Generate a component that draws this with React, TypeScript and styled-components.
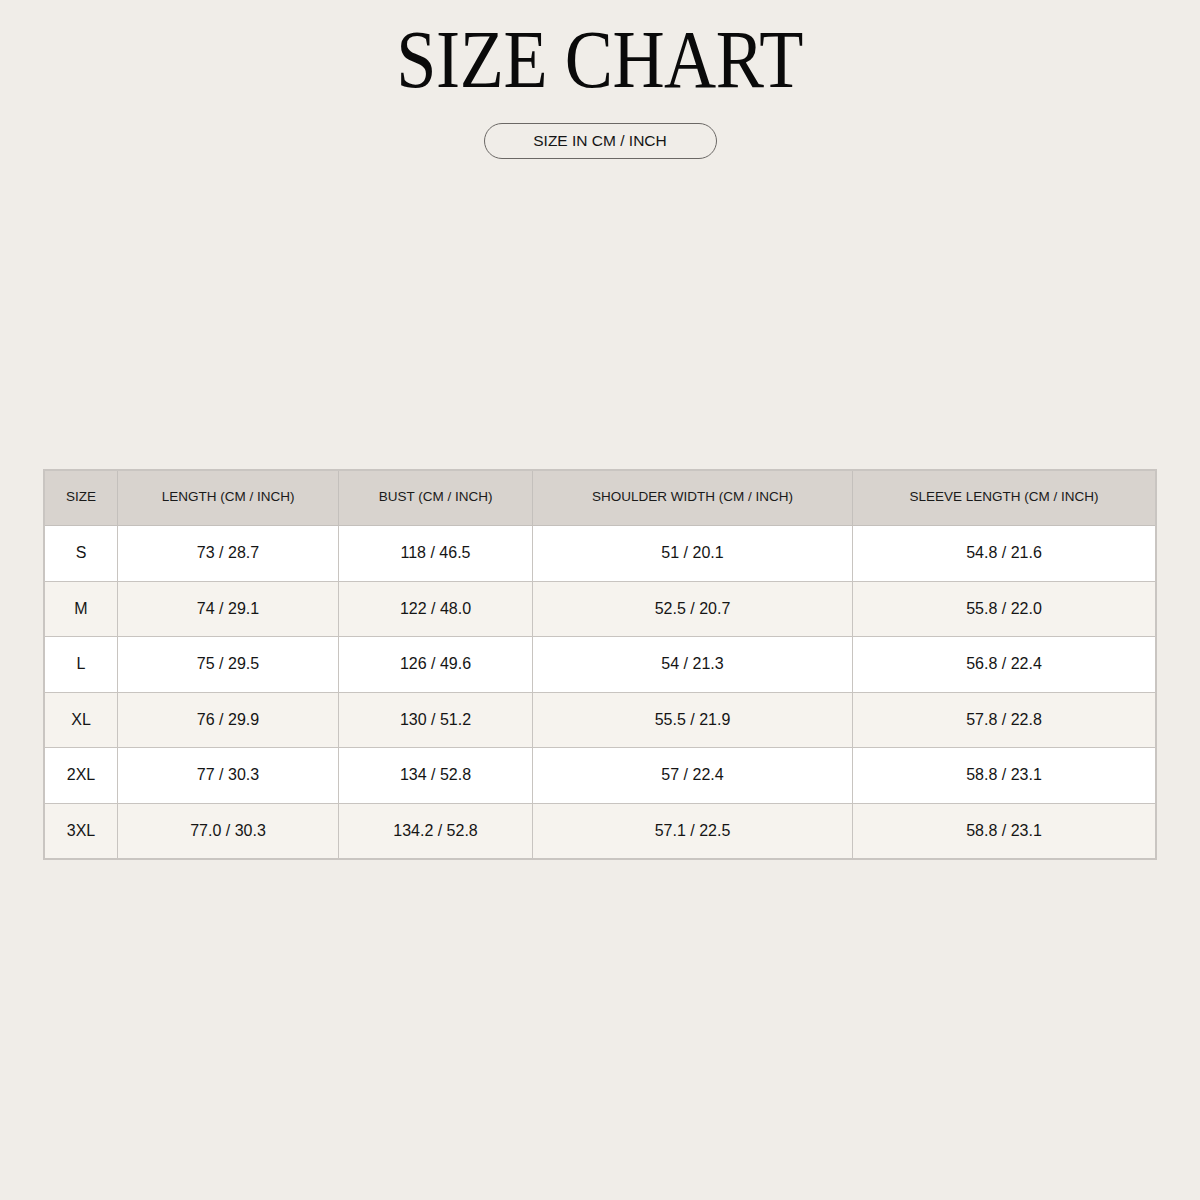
import React from 'react';
import styled, { createGlobalStyle } from 'styled-components';

const GlobalStyle = createGlobalStyle`
  html, body {
    margin: 0;
    padding: 0;
    background-color: #f0ede8;
  }
  body {
    font-family: "Liberation Sans", Arial, sans-serif;
    color: #111;
  }
`;

const Page = styled.div`
  width: 1200px;
  min-height: 1200px;
  padding-top: 18px;
  box-sizing: border-box;
  display: flex;
  flex-direction: column;
  align-items: center;
`;

const Title = styled.h1`
  margin: 0;
  font-family: "Liberation Serif", "Times New Roman", serif;
  font-weight: 400;
  font-size: 83px;
  line-height: 1;
  letter-spacing: -0.5px;
  color: #0a0a0a;
  transform: scaleX(0.87);
`;

const UnitPill = styled.div`
  margin-top: 22px;
  width: 233px;
  height: 36px;
  box-sizing: border-box;
  border: 1px solid #6b6865;
  border-radius: 18px;
  display: flex;
  align-items: center;
  justify-content: center;
  font-size: 15.5px;
  color: #151515;
`;

const Table = styled.table`
  margin-top: 310px;
  width: 1112px;
  border-collapse: collapse;
  border: 2px solid #c9c5c1;
  table-layout: fixed;
`;

const HeadCell = styled.th<{ $w: number }>`
  width: ${({ $w }) => $w}px;
  height: 51px;
  padding: 0 0 3px;
  background-color: #d8d3ce;
  border: 1px solid #c4c0bc;
  font-weight: 400;
  font-size: 13.5px;
  color: #1a1a1a;
  text-align: center;
`;

const Row = styled.tr<{ $alt: boolean }>`
  background-color: ${({ $alt }) => ($alt ? '#f6f3ee' : '#ffffff')};
`;

const Cell = styled.td`
  height: 54.5px;
  padding: 0;
  border: 1px solid #c8c4c0;
  font-size: 16px;
  color: #151515;
  text-align: center;
`;

const columns = [
  { label: 'SIZE', w: 72 },
  { label: 'LENGTH (CM / INCH)', w: 220 },
  { label: 'BUST (CM / INCH)', w: 193 },
  { label: 'SHOULDER WIDTH (CM / INCH)', w: 319 },
  { label: 'SLEEVE LENGTH (CM / INCH)', w: 302 },
];

const rows = [
  ['S', '73 / 28.7', '118 / 46.5', '51 / 20.1', '54.8 / 21.6'],
  ['M', '74 / 29.1', '122 / 48.0', '52.5 / 20.7', '55.8 / 22.0'],
  ['L', '75 / 29.5', '126 / 49.6', '54 / 21.3', '56.8 / 22.4'],
  ['XL', '76 / 29.9', '130 / 51.2', '55.5 / 21.9', '57.8 / 22.8'],
  ['2XL', '77 / 30.3', '134 / 52.8', '57 / 22.4', '58.8 / 23.1'],
  ['3XL', '77.0 / 30.3', '134.2 / 52.8', '57.1 / 22.5', '58.8 / 23.1'],
];

const App: React.FC = () => {
  return (
    <>
      <GlobalStyle />
      <Page>
        <Title>SIZE CHART</Title>
        <UnitPill>SIZE IN CM / INCH</UnitPill>
        <Table>
          <thead>
            <tr>
              {columns.map((c) => (
                <HeadCell key={c.label} $w={c.w}>
                  {c.label}
                </HeadCell>
              ))}
            </tr>
          </thead>
          <tbody>
            {rows.map((r, i) => (
              <Row key={r[0]} $alt={i % 2 === 1}>
                {r.map((v, j) => (
                  <Cell key={j}>{v}</Cell>
                ))}
              </Row>
            ))}
          </tbody>
        </Table>
      </Page>
    </>
  );
};

export default App;
